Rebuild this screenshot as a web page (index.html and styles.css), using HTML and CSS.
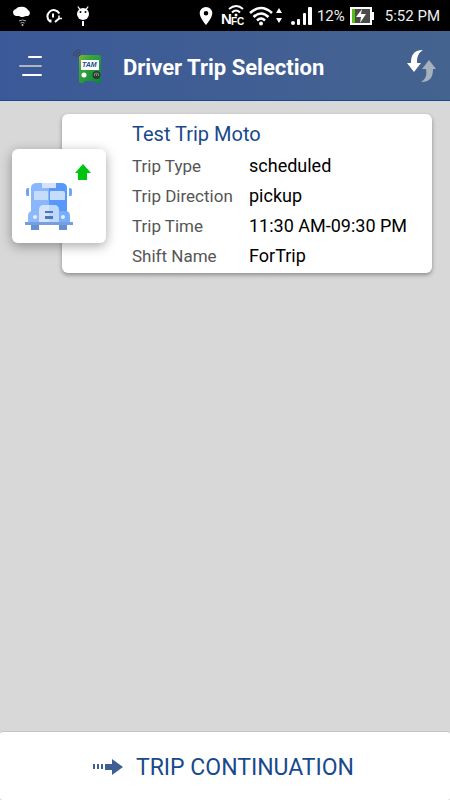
FILE: index.html
```html
<!DOCTYPE html>
<html lang="en">
<head>
<meta charset="utf-8">
<meta name="viewport" content="width=device-width, initial-scale=1">
<title>Driver Trip Selection</title>
<link rel="stylesheet" href="styles.css">
</head>
<body>
<div class="status">
  <div class="status-group notices">
    <svg width="20" height="20" viewBox="0 0 20 20" fill="#fff" aria-hidden="true">
      <path d="M4 10a3.500 3.500 0 0 1-.5-6.800A7 5 0 0 1 16 4a3.300 3.300 0 0 1 0 6H14L11 11H9L7 10z"/>
      <path d="M7 15q3.500-2 7 0M8.500 17q2-1 4 0" fill="none" stroke="#aaa" stroke-width="1"/>
      <circle cx="10.500" cy="19" r="1" fill="#bbb"/>
    </svg>
    <svg width="18" height="18" viewBox="0 0 18 18" fill="none" stroke="#fff" aria-hidden="true">
      <path d="M5 14.500A6.300 6.300 0 1 1 14.300 6.500M5.500 15.500v-3" stroke-width="2"/>
      <path d="M8 6.500v4" stroke-width="2"/>
      <path d="M10 15l4-3.500" stroke-width="2"/>
      <path d="M14 8.500v3h3" stroke-width="1.500"/>
    </svg>
    <svg width="14" height="20" viewBox="0 0 14 20" fill="#fff" aria-hidden="true">
      <path d="M2 0l2.500 3-1 1L1.500 1zM12 0L9.500 3l1 1 2-3z"/>
      <circle cx="7" cy="8" r="6"/>
      <circle cx="4.500" cy="6" r="1" fill="#000"/><circle cx="9.500" cy="6" r="1" fill="#000"/>
      <path d="M6 15h2v5H6z"/>
    </svg>
  </div>
  <div class="status-group signals">
    <svg width="18" height="18" viewBox="0 0 18 18" aria-hidden="true">
      <path fill="#fff" fill-rule="evenodd" d="M7 0a6.300 6.300 0 0 1 6.300 6.300C13.300 11 7 18 7 18S.7 11 .7 6.300A6.300 6.300 0 0 1 7 0zm0 4a2.300 2.300 0 1 0 0 4.600A2.300 2.300 0 0 0 7 4z"/>
    </svg>
    <svg class="nfc" width="24" height="24" viewBox="0 0 24 24" aria-label="NFC">
      <text x="0" y="20" font-size="15">N</text>
      <text x="10" y="21" font-size="10">FC</text>
      <g fill="none" stroke="#fff" stroke-width="2"><path d="M8 5q7.500-6 14 0M11 8.500q4-4 8 0"/></g>
      <circle cx="15" cy="11" r="1.500" fill="#fff"/>
    </svg>
    <svg width="38" height="20" viewBox="0 0 38 20" fill="none" stroke="#fff" aria-hidden="true">
      <path d="M1 7q11-10 22 0M4.500 11q7.500-7 15 0M8 14.500q4-4 8 0" stroke-width="2.500"/>
      <circle cx="12" cy="17.500" r="2" fill="#fff" stroke="none"/>
      <path d="M27 7l3-5 3 5zM27 12h6l-3 5z" fill="#fff" stroke="none"/>
    </svg>
    <svg width="22" height="18" viewBox="0 0 22 18" fill="#fff" aria-hidden="true">
      <circle cx="2" cy="16" r="2"/>
      <rect x="6" y="12" width="3" height="6" rx="1"/><rect x="12" y="6" width="3" height="12" rx="1"/><rect x="17" y="0" width="4" height="18" rx="1"/>
    </svg>
    <span>12%</span>
    <svg class="battery" width="26" height="18" viewBox="0 0 26 18" aria-hidden="true">
      <path fill="#fff" d="M1 0h22v5h2v8h-2v5H1z"/>
      <path fill="#4b4b4b" d="M3 2h18v14H3z"/><path fill="#59bd17" d="M3 2h3v14H3z"/>
      <path fill="#fff" d="M13 2L7 10h5l-1 6 6-9h-5z"/>
    </svg>
    <time>5:52 PM</time>
  </div>
</div>
<header class="bar">
  <button class="icon-button" type="button" aria-label="Menu">
    <svg width="24" height="24" viewBox="0 0 24 24" fill="none" stroke-width="2" stroke-linecap="round" aria-hidden="true">
      <path d="M11 3h12M5 21h18" stroke="#fff"/><path d="M2 12h21" stroke="#b2b5bd"/>
    </svg>
  </button>
  <svg class="logo" width="32" height="36" viewBox="0 0 32 36" aria-label="TAM">
    <defs><linearGradient id="bus-green" x1="0" y1="0" x2="1" y2="1"><stop offset="0" stop-color="#86b52e"/><stop offset=".3" stop-color="#37a53b"/><stop offset="1" stop-color="#07863a"/></linearGradient></defs>
    <path fill="url(#bus-green)" d="M9 7h18q2 0 2 2v23q0 3-2 3h-3l-1-2H13l-1 2H9q-2 0-2-3V9q0-2 2-2z"/>
    <g fill="none" stroke="#3e4250" stroke-width="1"><path d="M1.500 8q0-6 7-6M4 8.500q0-4 4.500-4M6 9q0-2 2.500-2"/></g>
    <path fill="#fff" d="M9 12h18v10H9z"/>
    <text x="10" y="19" font-size="7" font-weight="bold" font-style="italic">TAM</text>
    <circle cx="12" cy="27" r="2.500" fill="#fff"/>
    <circle cx="24.500" cy="27" r="4" fill="#293b32"/><path d="M22.500 28q-1-3 2-3t2 3M24.500 26v2" fill="none" stroke="#849188"/>
  </svg>
  <h1>Driver Trip Selection</h1>
  <button class="icon-button refresh" type="button" aria-label="Refresh">
    <svg width="32" height="34" viewBox="0 0 32 34" aria-hidden="true">
      <path fill="#fff" d="M17 1C7 1 5 7 5 14H1l7 9 7-9h-4C11 8 12 4 17 1z"/>
      <path fill="#a5b1bc" d="M15 33c10 0 12-6 12-13h3l-7-9-7 9h4c1 6 0 10-5 13z"/>
    </svg>
  </button>
</header>
<main>
  <article class="trip">
    <div class="badge">
      <svg viewBox="0 0 94 94" aria-hidden="true">
        <path fill="#00c510" d="M71 15l8 9h-4v7h-9v-7h-3z"/>
        <path fill="#6591cf" d="M19 74h8v7h-8zM47 74h8v7h-8z"/>
        <path fill="#8ab6fb" d="M19 72V39q0-5 6-5h12v40H19z"/>
        <path fill="#5898f8" d="M37 34h12q6 0 6 5v35H37z"/>
        <path fill="#d4e3fb" d="M30 34h14v5H30z"/>
        <path fill="#c5dcfb" d="M23 42h12q1 0 1 1v8H22v-8q0-1 1-1zM39 42h12q2 0 2 2v7H38v-8q0-1 1-1z"/>
        <path fill="#6ea6fb" d="M14 41q0-2 2-2h1v8h-2q-1 0-1-2zM57 39h1q2 0 2 2v4q0 2-1 2h-2z"/>
        <path fill="#8db8fb" d="M16 73v-6q0-5 5-5h6v12H16z"/><path fill="#78adfa" d="M47 62h6q5 0 5 5v7H47z"/>
        <path fill="#d4e3fb" d="M27 73V61q0-5 5-5h5v17z"/><path fill="#bfd6fb" d="M37 56h5q5 0 5 5v12H37z"/>
        <path fill="#759fe0" d="M13 73h48v3H13z"/><path fill="#fff" d="M27 76h20v5H27z"/>
        <path fill="#4b77b6" d="M33 62h8v2h-8zM33 67h8v3h-8z"/>
        <circle cx="23" cy="68" r="2" fill="#e3efff"/><circle cx="51" cy="68" r="2" fill="#e3efff"/>
      </svg>
    </div>
    <div class="details">
      <h2>Test Trip Moto</h2>
      <dl>
        <dt>Trip Type</dt><dd>scheduled</dd>
        <dt>Trip Direction</dt><dd>pickup</dd>
        <dt>Trip Time</dt><dd>11:30 AM-09:30 PM</dd>
        <dt>Shift Name</dt><dd>ForTrip</dd>
      </dl>
    </div>
  </article>
</main>
<button class="continue" type="button">
  <svg width="32" height="18" viewBox="0 0 32 18" fill="#3e5f91" aria-hidden="true">
    <path d="M1 6h2v5H1zM5 6h2v5H5zM9 6h2v5H9zM13 6h7V1l11 8-11 8v-5h-7z"/>
  </svg>
  Trip Continuation
</button>
</body>
</html>
```

FILE: styles.css
```css
* {
  box-sizing: border-box;
}

body {
  margin: 0;
  min-height: 100vh;
  display: flex;
  flex-direction: column;
  background: #d8d8d8;
  font-family: Roboto, "Liberation Sans", sans-serif;
}

svg {
  display: block;
  flex: none;
}

button {
  border: 0;
  padding: 0;
  background: none;
  font: inherit;
  cursor: pointer;
}

.status {
  display: flex;
  justify-content: space-between;
  height: 31px;
  padding: 1px 10px 0 12px;
  background: #000;
  color: #eee;
  font-size: 15px;
}

.status-group {
  display: flex;
  align-items: center;
}

.notices {
  gap: 13px;
}

.signals {
  gap: 4px;
}

.nfc text {
  fill: #fff;
  font-family: "Liberation Sans", sans-serif;
  font-weight: bold;
}

.battery {
  margin-right: 6px;
}

.bar {
  display: flex;
  align-items: center;
  height: 70px;
  padding: 0 12px 0 18px;
  background: linear-gradient(90deg, #3b5998, #45638f);
  border-bottom: 1px solid #17498d;
}

.logo {
  margin: 0 19px 0 30px;
}

.logo text {
  fill: #174b8c;
  font-family: "Liberation Sans", sans-serif;
}

h1 {
  flex: 1;
  margin: 0;
  padding-top: 4px;
  color: #fff;
  font-size: 22px;
  font-weight: 700;
  line-height: 30px;
  white-space: nowrap;
}

main {
  flex: 1;
  padding: 13px 18px 24px 12px;
}

.trip {
  display: grid;
  grid-template-columns: 50px 44px 1fr;
  align-items: center;
}

.details {
  grid-area: 1 / 2 / 2 / 4;
  padding: 5px 8px 2px 70px;
  background: #fff;
  border-radius: 6px;
  box-shadow: 0 2px 4px rgba(0, 0, 0, .35);
}

.badge {
  grid-area: 1 / 1 / 2 / 3;
  z-index: 1;
  margin-top: 4px;
  background: #fff;
  border-radius: 6px;
  box-shadow: 0 3px 12px rgba(0, 0, 0, .35);
}

h2 {
  margin: 0 0 2px;
  color: #17498d;
  font-size: 20px;
  font-weight: 400;
  line-height: 30px;
}

dl {
  display: grid;
  grid-template-columns: 117px 1fr;
  margin: 0;
  font-size: 18px;
  line-height: 30px;
}

dt {
  color: #555;
  font-size: 17px;
}

dd {
  margin: 0;
  color: #000;
}

.continue {
  display: flex;
  align-items: center;
  justify-content: center;
  gap: 12px;
  height: 69px;
  padding: 2px 4px 0 0;
  background: #fff;
  border-top: 1px solid #c4c4c4;
  border-radius: 3px;
  color: #17498d;
  font-size: 23px;
  text-transform: uppercase;
}
```
